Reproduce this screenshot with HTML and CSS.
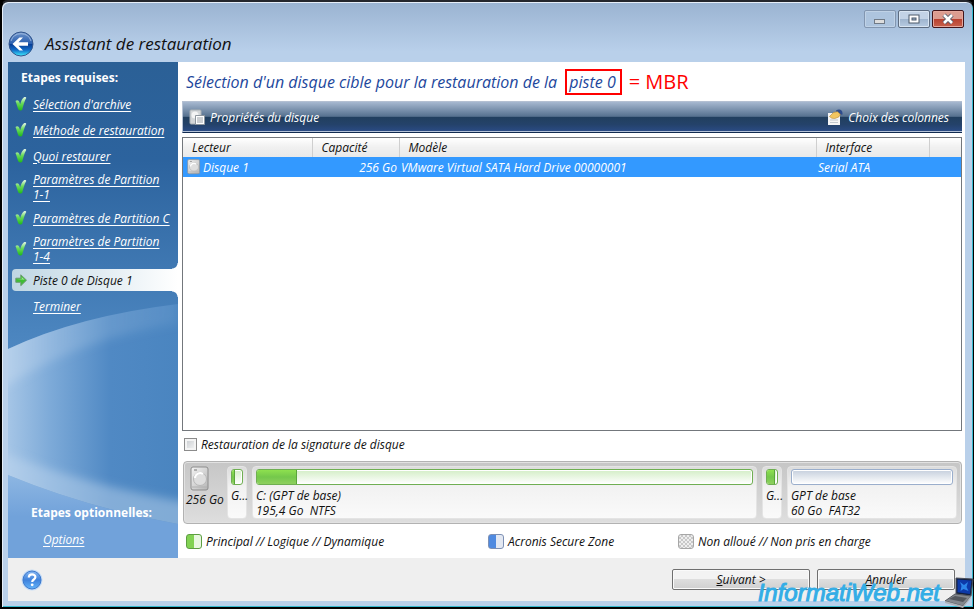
FILE: index.html
```
<!doctype html>
<html lang="fr">
<head>
  <meta charset="utf-8">
  <title>Assistant de restauration</title>
  <link rel="stylesheet" href="styles.css">
</head>
<body>

	<svg class="defs" width="0" height="0" aria-hidden="true">
		<defs>
			<linearGradient id="tick" x1="0" y1="0" x2="0" y2="1">
				<stop offset="0" stop-color="#e4f6e8"/>
				<stop offset=".45" stop-color="#6bdc5c"/>
				<stop offset="1" stop-color="#1fb81a"/>
			</linearGradient>
			<linearGradient id="metal" x1="0" y1="0" x2="1" y2="1">
				<stop offset="0" stop-color="#f4f4f4"/>
				<stop offset="1" stop-color="#b5b5b5"/>
			</linearGradient>
			<symbol id="check" viewBox="0 0 12 14">
				<path d="M.5 4C2 2.700 3.800 3.200 4.500 5.400l.7 1.800C6 4.400 7 1.800 8.700 .5c1.200-.8 3-.3 2.400 .8C9.300 4.600 8.300 8.800 7.300 12.500c-.7 1.300-3.200 1.300-3.900 0C2.500 10.300 1.600 6.800 .5 4z" fill="url(#tick)"/>
			</symbol>
			<symbol id="disk" viewBox="0 0 20 26">
				<rect x="1" y="1" width="17" height="23" rx="2" fill="url(#metal)" stroke="#8d8d8d"/>
				<path d="M2 21h15" stroke="#b0b0b0"/>
				<circle cx="10" cy="13" r="6.500" fill="#dedede" stroke="#b8b8b8"/>
				<path d="M5 12a5 5 0 0 1 8-4" fill="none" stroke="#fff" stroke-width="2"/>
				<path d="M4 4h3" stroke="#777"/>
			</symbol>
		</defs>
	</svg>

	<div class="window">
		<header class="titlebar">
			<div class="controls">
				<button type="button" class="control off" aria-label="Réduire">
					<svg width="14" height="12" viewBox="0 0 14 12"><rect x="1.500" y="6.500" width="10" height="4" fill="#ddd" stroke="#707a86"/></svg>
				</button>
				<button type="button" class="control" aria-label="Agrandir">
					<svg width="12" height="10" viewBox="0 0 12 10"><rect x="1" y="1" width="10" height="8" fill="#fff" stroke="#4c5a6b"/><rect x="4" y="4" width="4" height="2" fill="#9fb4cc" stroke="#4c5a6b"/></svg>
				</button>
				<button type="button" class="control close" aria-label="Fermer">
					<svg width="14" height="12" viewBox="0 0 14 12"><path d="M3 2l8 8M11 2l-8 8" stroke="#555b6c" stroke-width="4.500"/><path d="M3 2l8 8M11 2l-8 8" stroke="#fff" stroke-width="2.600"/></svg>
				</button>
			</div>
			<div class="heading">
				<button type="button" class="back" aria-label="Retour">
					<svg width="26" height="26" viewBox="0 0 26 26">
						<defs>
							<linearGradient id="backfill" x1="0" y1="0" x2="0" y2="1">
								<stop offset="0" stop-color="#6d93c8"/>
								<stop offset=".48" stop-color="#2a5fb0"/>
								<stop offset=".5" stop-color="#063a92"/>
								<stop offset=".75" stop-color="#126cc8"/>
								<stop offset="1" stop-color="#3ff0ff"/>
							</linearGradient>
						</defs>
						<circle cx="13" cy="13" r="12" fill="url(#backfill)" stroke="#34568d"/>
						<path d="M3 10a10.500 10.500 0 0 1 20 0" fill="none" stroke="#b8cdea" stroke-opacity=".7"/>
						<path d="M4.500 13l7-6.500h3.500l-4.500 4.800H20v3.400h-9.500l4.500 4.800h-3.500z" fill="#fff"/>
					</svg>
				</button>
				<h1>Assistant de restauration</h1>
			</div>
		</header>

		<div class="content">
			<nav class="sidebar">
				<svg class="swoosh" viewBox="0 0 170 496" preserveAspectRatio="none" aria-hidden="true">
					<defs>
						<linearGradient id="sky" x1="0" y1="0" x2="0" y2="1">
							<stop offset="0" stop-color="#2b6096"/>
							<stop offset=".2" stop-color="#2c639e"/>
							<stop offset=".55" stop-color="#4b85bf"/>
							<stop offset=".8" stop-color="#6094cd"/>
							<stop offset="1" stop-color="#71a2da"/>
						</linearGradient>
						<linearGradient id="wave" x1="0" y1="0" x2="1" y2="0">
							<stop offset="0" stop-color="#a5c5e6"/>
							<stop offset=".25" stop-color="#7daad8"/>
							<stop offset=".6" stop-color="#5089c4"/>
							<stop offset="1" stop-color="#4a85c0"/>
						</linearGradient>
						<linearGradient id="edge" x1="0" y1="0" x2="1" y2="0">
							<stop offset="0" stop-color="#dbe8f6" stop-opacity=".35"/>
							<stop offset="1" stop-color="#a9c8e8" stop-opacity=".12"/>
						</linearGradient>
						<linearGradient id="floor" x1="0" y1="0" x2="0" y2="1">
							<stop offset="0" stop-color="#8db6e2"/>
							<stop offset=".5" stop-color="#71a2da"/>
							<stop offset="1" stop-color="#71a2da"/>
						</linearGradient>
						<filter id="soft" x="-20%" y="-20%" width="140%" height="140%"><feGaussianBlur stdDeviation="5"/></filter>
						<clipPath id="wavearea"><path d="M0 287Q70 254 170 242V462Q80 446 0 413z"/></clipPath>
					</defs>
					<rect width="170" height="496" fill="url(#sky)"/>
					<path d="M0 413Q80 446 170 462V496H0z" fill="url(#floor)"/>
					<g clip-path="url(#wavearea)">
						<path d="M0 240H170V470H0z" fill="url(#wave)"/>
						<path d="M-20 270L170 225V262Q70 275 -20 335z" fill="url(#edge)" filter="url(#soft)"/>
						<path d="M-20 385Q80 425 190 442V480H-20z" fill="#c3d9f0" fill-opacity=".45" filter="url(#soft)"/>
					</g>
				</svg>

				<h2>Etapes requises:</h2>
				<ul class="steps">
					<li><svg class="mark"><use href="#check"/></svg><a href="#archive">Sélection d'archive</a></li>
					<li><svg class="mark"><use href="#check"/></svg><a href="#methode">Méthode de restauration</a></li>
					<li><svg class="mark"><use href="#check"/></svg><a href="#quoi">Quoi restaurer</a></li>
					<li><svg class="mark"><use href="#check"/></svg><a href="#partition-1-1">Paramètres de Partition 1-1</a></li>
					<li><svg class="mark"><use href="#check"/></svg><a href="#partition-c">Paramètres de Partition C</a></li>
					<li><svg class="mark"><use href="#check"/></svg><a href="#partition-1-4">Paramètres de Partition 1-4</a></li>
					<li class="current" aria-current="step">
						<svg class="mark" viewBox="0 0 12 14"><path d="M.8 5.200h5V1.800l5.700 5.400-5.700 5.500V9.300h-5z" fill="#3fbd35" stroke="#6d9c74"/><path d="M1.500 6h5.200V4l3 2.800z" fill="#9be88b"/></svg>
						<span>Piste 0 de Disque 1</span>
					</li>
					<li><span class="mark"></span><a href="#terminer">Terminer</a></li>
				</ul>

				<div class="optional">
					<h2>Etapes optionnelles:</h2>
					<a href="#options">Options</a>
				</div>
			</nav>

			<main class="main">
				<h2 class="page-title">Sélection d'un disque cible pour la restauration de la <span class="framed">piste 0</span><span class="note">= MBR</span></h2>

				<div class="toolbar">
					<button type="button">
						<svg width="17" height="17" viewBox="0 0 17 17">
							<rect x="1" y="1" width="11" height="14" rx="1" fill="#d3d6d8" stroke="#aab0b5"/>
							<circle cx="6" cy="6" r="3.500" fill="#f4f4f4"/>
							<path d="M6.500 6.500h9v9h-9z" fill="#fff" stroke="#8e969e"/>
							<path d="M8 9h6M8 11h6M8 13h6" stroke="#9aa0a6"/>
						</svg>
						Propriétés du disque
					</button>
					<button type="button">
						<svg width="17" height="17" viewBox="0 0 17 17">
							<path d="M1 4h12v12H1z" fill="#f5f5f5"/>
							<path d="M3 11h8M3 13.500h8" stroke="#c2c8ce"/>
							<path d="M9 1.500c3-2 7-1 6.500 4l-3 .5-3-3z" fill="#2d4c8c"/>
							<path d="M2.500 7.500l4-4 4-.8 2.800 2.500-1.500 2.800-4 1.500-3-.3z" fill="#f2c661" stroke="#b98a35" stroke-width=".6"/>
						</svg>
						Choix des colonnes
					</button>
				</div>

				<div class="list">
					<table>
						<colgroup>
							<col class="col-drive">
							<col class="col-size">
							<col>
							<col class="col-interface">
							<col class="col-rest">
						</colgroup>
						<thead>
							<tr><th>Lecteur</th><th>Capacité</th><th>Modèle</th><th>Interface</th><th></th></tr>
						</thead>
						<tbody>
							<tr>
								<td><span class="drive"><svg width="14" height="16" viewBox="0 0 20 26" preserveAspectRatio="none"><use href="#disk" width="20" height="26"/></svg>Disque 1</span></td>
								<td class="number">256 Go</td>
								<td>VMware Virtual SATA Hard Drive 00000001</td>
								<td>Serial ATA</td>
								<td></td>
							</tr>
						</tbody>
					</table>
				</div>

				<label class="signature"><input type="checkbox"> Restauration de la signature de disque</label>

				<div class="map">
					<div class="map-disk">
						<svg width="20" height="26"><use href="#disk"/></svg>
						<span>256 Go</span>
					</div>
					<div class="volume small">
						<div class="bar"><div class="used" style="width: 25%"></div></div>
						<p>G...</p>
					</div>
					<div class="volume system">
						<div class="bar"><div class="used" style="width: 8%"></div></div>
						<p>C: (GPT de base)</p>
						<p>195,4 Go&nbsp; NTFS</p>
					</div>
					<div class="volume small">
						<div class="bar"><div class="used" style="width: 85%"></div></div>
						<p>G...</p>
					</div>
					<div class="volume data">
						<div class="bar plain"></div>
						<p>GPT de base</p>
						<p>60 Go&nbsp; FAT32</p>
					</div>
				</div>

				<ul class="legend">
					<li><span class="swatch green"></span>Principal // Logique // Dynamique</li>
					<li><span class="swatch blue"></span>Acronis Secure Zone</li>
					<li><span class="swatch checker"></span>Non alloué // Non pris en charge</li>
				</ul>
			</main>
		</div>

		<footer class="footer">
			<button type="button" class="help" aria-label="Aide">
				<svg width="22" height="22" viewBox="0 0 22 22">
					<defs>
						<linearGradient id="helpfill" x1="0" y1="0" x2="0" y2="1">
							<stop offset="0" stop-color="#86b7f2"/>
							<stop offset=".5" stop-color="#3f82dc"/>
							<stop offset="1" stop-color="#63b4fa"/>
						</linearGradient>
					</defs>
					<circle cx="11" cy="11" r="10.500" fill="#c5dcf6"/>
					<circle cx="11" cy="11" r="9" fill="url(#helpfill)" stroke="#3c78cc"/>
					<path d="M7.800 8.500c0-4.200 6.600-4 6.600-.4 0 2.500-3.200 2.300-3.200 4.900" fill="none" stroke="#fff" stroke-width="2.200"/>
					<circle cx="11.200" cy="15.800" r="1.400" fill="#fff"/>
				</svg>
			</button>
			<div class="actions">
				<button type="button" class="action"><u>S</u>uivant &gt;</button>
				<button type="button" class="action"><u>A</u>nnuler</button>
			</div>
		</footer>
	</div>

	<div class="watermark">
		<span>InformatiWeb.net</span>
		<svg width="30" height="32" viewBox="0 0 30 32">
			<path d="M12 1l17 1-2 17-15-2z" fill="#14213f" stroke="#4a4f5c"/>
			<path d="M13.500 2.500l14 1-1.600 13.500-12.400-1.700z" fill="#0d39a8"/>
			<path d="M16 5l4 3 4-3-1.500 5 2 4-5-2-3 2 1-5z" fill="#2c86ea"/>
			<path d="M11 17l16 2-8 10L1 24z" fill="#83878d" stroke="#54585e"/>
			<path d="M11 19l12 2-4 4-14-3z" fill="#53575d"/>
			<path d="M1 24l18 5 8-10v2l-8 10L1 26z" fill="#aeb2b7"/>
		</svg>
	</div>

</body>
</html>
```
FILE: styles.css
```
* {
	box-sizing: border-box;
}
body {
	margin: 0;
	background: #000;
	color: #111;
	font: italic 12px/15px "Open Sans", "Noto Sans", sans-serif;
}
h1, h2, p, ul {
	margin: 0;
	padding: 0;
	font-weight: normal;
}
ul {
	list-style: none;
}
button {
	padding: 0;
	border: 0;
	background: none;
	color: inherit;
	font: inherit;
}
svg {
	display: block;
	flex: none;
}
.defs {
	position: absolute;
}

/* window frame */
.window {
	display: flex;
	flex-direction: column;
	min-height: 100vh;
	padding: 0 8px 6px 6px;
	border: 2px solid #000;
	border-top-color: #24262c;
	border-right-width: 1px;
	background: linear-gradient(#9ab3d1, #b9d0ea 50px, #b9d0ea);
	box-shadow: inset 1px 1px #e6eef8, inset -1px -1px #35b9cf;
	border-radius: 8px 8px 0 0;
}
.titlebar {
	display: flex;
	flex-direction: column;
	height: 60px;
}
.controls {
	display: flex;
	justify-content: flex-end;
	gap: 2px;
	padding: 8px 1px 0 0;
}
.control {
	display: flex;
	align-items: center;
	justify-content: center;
	width: 32px;
	height: 18px;
	border: 1px solid #5d6c80;
	border-radius: 2px;
	background: linear-gradient(#c3d3e6 48%, #9eb4ce 50%, #b7cbe2);
	box-shadow: inset 0 0 0 1px #d9e5f2;
}
.control.off {
	border-color: #8296b0;
	background: #adc4de;
	box-shadow: inset 0 0 0 1px #c0d2e6;
}
.control.close {
	border-color: #43151a;
	background: linear-gradient(#dc9c90 48%, #b9402f 50%, #c7614c);
	box-shadow: inset 0 0 0 1px #e5a79c;
}
.heading {
	display: flex;
	align-items: center;
	gap: 11px;
	margin-top: 3px;
}
h1 {
	font-size: 17px;
	line-height: 24px;
}
.content {
	display: flex;
	flex: 1;
}

/* steps */
.sidebar {
	position: relative;
	display: flex;
	flex-direction: column;
	flex: none;
	width: 170px;
	padding: 8px 0 11px 4px;
	color: #fff;
}
.swoosh {
	position: absolute;
	top: 0;
	left: 0;
	width: 100%;
	height: 100%;
}
.sidebar h2 {
	position: relative;
	padding-left: 9px;
	font-size: 12px;
	font-style: normal;
	font-weight: bold;
}
.sidebar a {
	color: inherit;
	text-underline-offset: 2px;
}
.steps {
	position: relative;
	margin-top: 6px;
}
.steps li {
	display: flex;
	align-items: center;
	gap: 6px;
	min-height: 26px;
	padding: 3px 8px 3px 3px;
}
.mark {
	flex: none;
	width: 12px;
	height: 14px;
}
.steps .current {
	position: relative;
	min-height: 22px;
	margin: 2px 0;
	border-radius: 4px 0 0 4px;
	background: linear-gradient(90deg, #bfd6e3, #fff);
	color: #111;
}
.current::before,
.current::after {
	content: "";
	position: absolute;
	right: 0;
	width: 6px;
	height: 6px;
}
.current::before {
	bottom: 100%;
	background: radial-gradient(circle at 0 0, transparent 5px, #fff 6px);
}
.current::after {
	top: 100%;
	background: radial-gradient(circle at 0 100%, transparent 5px, #fff 6px);
}
.optional {
	position: relative;
	display: flex;
	flex-direction: column;
	align-items: flex-start;
	gap: 12px;
	margin-top: auto;
	padding-left: 10px;
}
.optional a {
	margin-left: 21px;
}

/* main pane */
.main {
	display: flex;
	flex-direction: column;
	flex: 1;
	min-width: 0;
	padding: 6px 3px 9px 4px;
	background: #fff;
}
.page-title {
	display: flex;
	align-items: center;
	height: 28px;
	padding-left: 4px;
	color: #1d479c;
	font-size: 16px;
	line-height: 22px;
	white-space: pre;
}
.framed {
	margin-left: 4px;
	padding: 0 4px 0 2px;
	border: 2px solid #f00;
}
.note {
	margin-left: 7px;
	color: #f00;
	font-size: 20px;
	font-style: normal;
}
.toolbar {
	display: flex;
	align-items: center;
	justify-content: space-between;
	height: 32px;
	margin-top: 5px;
	padding: 0 13px 0 6px;
	border: 1px solid #b4c0d2;
	border-width: 1px 0 0 1px;
	border-bottom: 1px solid #102a50;
	background: linear-gradient(#a6b8d0, #56718f 48%, #213f5e 50%, #24426a 75%, #2b4c87);
	box-shadow: inset 0 -1px #b5c3d8;
	color: #fff;
	text-shadow: 1px 1px 1px #10223c;
}
.toolbar button {
	display: flex;
	align-items: center;
	gap: 4px;
}
.list {
	flex: 1;
	margin-top: 4px;
	border: 1px solid #73777c;
}
table {
	width: 100%;
	border-collapse: collapse;
	table-layout: fixed;
}
.col-drive { width: 129px; }
.col-size { width: 87px; }
.col-interface { width: 113px; }
.col-rest { width: 32px; }
th {
	height: 19px;
	padding: 0 9px;
	border-right: 1px solid #cfcfcf;
	background: linear-gradient(#fff, #f0f0f0 50%, #e9e9e9);
	font-weight: normal;
	text-align: left;
}
th:last-child {
	border-right: 0;
}
td {
	height: 20px;
	padding: 0 2px;
	background: #3399ff;
	color: #fff;
}
.number {
	text-align: right;
}
.drive {
	display: flex;
	align-items: center;
	gap: 2px;
	padding-left: 2px;
}
.signature {
	display: flex;
	align-items: center;
	align-self: flex-start;
	gap: 4px;
	margin: 6px 0 0 2px;
}
.signature input {
	width: 13px;
	height: 13px;
	margin: 0;
	border: 1px solid #8b8b8b;
	background: linear-gradient(135deg, #c5c9cd, #f8f8f8);
	box-shadow: inset 0 0 0 2px #f4f4f4;
	appearance: none;
}
.signature input:checked {
	background: #3c78cc;
}

/* disk map */
.map {
	display: flex;
	gap: 5px;
	height: 63px;
	margin: 9px 0 0 1px;
	padding: 4px;
	border: 1px solid #b2b2b2;
	border-radius: 4px;
	background: linear-gradient(#c6c6c6, #dedede);
	box-shadow: inset 0 0 0 1px #e2e2e2;
}
.map-disk {
	flex: none;
	width: 34px;
	white-space: nowrap;
}
.map-disk svg {
	margin-left: 2px;
}
.map-disk span {
	display: block;
	margin-left: -2px;
}
.volume {
	min-width: 0;
	padding: 2px 3px;
	border: 1px solid #e4e4e4;
	border-radius: 4px;
	background: linear-gradient(#dcdcdc, #f2f2f2 40%, #fafafa);
	white-space: nowrap;
}
.volume.small {
	flex: none;
	width: 20px;
}
.volume.small p {
	margin-right: -4px;
}
.volume.system {
	flex: 46;
}
.volume.data {
	flex: 15;
}
.bar {
	height: 16px;
	margin-bottom: 3px;
	overflow: hidden;
	border: 1px solid #6faf52;
	border-radius: 3px;
	background: linear-gradient(#d3eec6, #fff);
	box-shadow: inset 0 0 0 1px #fff;
}
.used {
	height: 100%;
	border-right: 1px solid #5aa53a;
	background: linear-gradient(#8ee04f, #74c84b 50%, #8ed05f);
}
.bar.plain {
	border-color: #9aaecc;
	background: linear-gradient(#c5cfdd, #fff);
}
.legend {
	display: grid;
	grid-template-columns: 302fr 190fr 284fr;
	margin: 10px 0 0 4px;
}
.legend li {
	display: flex;
	align-items: center;
	gap: 4px;
}
.swatch {
	width: 16px;
	height: 15px;
	border: 1px solid #999;
	border-radius: 3px;
}
.green {
	border-color: #5d9e42;
	background: linear-gradient(90deg, #82d253 50%, #e8f7e0 50%);
}
.blue {
	border-color: #7d90b4;
	background: linear-gradient(90deg, #4f8ae0 50%, #e3e8f2 50%);
}
.checker {
	border-color: #a6a6a6;
	background: repeating-conic-gradient(#c8c8c8 0 25%, #eee 0 50%) 0 0 / 4px 4px;
}

/* footer */
.footer {
	display: flex;
	align-items: center;
	justify-content: space-between;
	height: 43px;
	padding: 0 10px 0 13px;
	background: #efefef;
}
.actions {
	display: flex;
	gap: 7px;
}
.action {
	width: 138px;
	height: 21px;
	border: 1px solid #6f6f6f;
	border-radius: 2px;
	background: linear-gradient(#f3f3f3 48%, #dedede 50%, #d0d0d0);
	box-shadow: inset 0 0 0 1px #fafafa;
}

.watermark {
	position: absolute;
	right: 0;
	bottom: 0;
	display: flex;
	align-items: center;
	gap: 4px;
	color: #33ade6;
	font: italic 24px/32px "Liberation Sans", sans-serif;
	-webkit-text-stroke: 1px #33ade6;
	pointer-events: none;
}
```
